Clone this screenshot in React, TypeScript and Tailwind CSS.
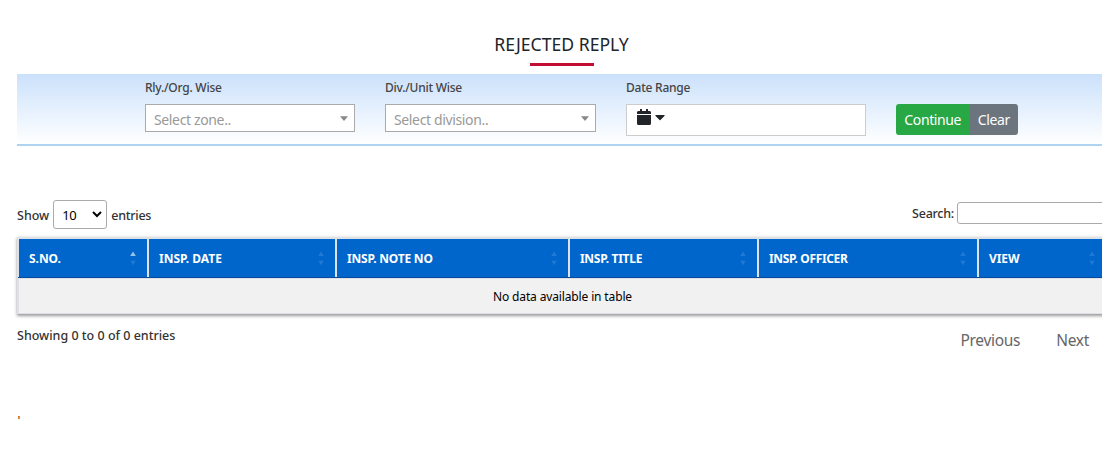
import React from "react";

const columns = [
  { label: "S.NO.", width: "w-[130px]", spacing: "tracking-[-0.05px]", active: true },
  { label: "INSP. DATE", width: "w-[188px]", spacing: "tracking-[-0.02px]" },
  { label: "INSP. NOTE NO", width: "w-[233px]", spacing: "tracking-[-0.2px]" },
  { label: "INSP. TITLE", width: "w-[189px]", spacing: "tracking-[-0.3px]" },
  { label: "INSP. OFFICER", width: "w-[220px]", spacing: "tracking-[-0.35px]" },
  { label: "VIEW", width: "w-[129px]", spacing: "tracking-[-0.1px]" },
];

function SortArrows({ active }: { active?: boolean }) {
  return (
    <svg width="6" height="15" viewBox="0 0 6 15" fill="#fff" className="shrink-0">
      <path d="M3 0.5L5.8 5H0.2Z" opacity={active ? 0.6 : 0.13} />
      <path d="M3 14.3L5.8 9.8H0.2Z" opacity={0.13} />
    </svg>
  );
}

function FieldLabel({ text }: { text: string }) {
  return (
    <div className="h-[30px] pt-[5px] text-[12px] leading-[18px] font-medium tracking-[-0.24px] whitespace-nowrap text-[#444]">
      {text}
    </div>
  );
}

function SelectBox({ label, placeholder }: { label: string; placeholder: string }) {
  return (
    <div className="w-[210px] shrink-0">
      <FieldLabel text={label} />
      <div className="flex h-7 items-center justify-between border border-[#aaa] bg-white pr-1.5 pl-2">
        <span className="pt-[3px] text-[14px] leading-5 tracking-[-0.36px] text-[#999]">{placeholder}</span>
        <svg width="8" height="5" viewBox="0 0 8 5" fill="#888">
          <path d="M0 0.3H8L4 5Z" />
        </svg>
      </div>
    </div>
  );
}

export default function App() {
  return (
    <div className="h-[465px] w-full overflow-hidden bg-white pl-[17px] font-['Noto_Sans',sans-serif] text-[#212529]">
      <div className="w-[1089px]">
        <header className="flex h-[74px] flex-col items-center">
          <h1 className="mt-[32px] text-[17.6px] leading-6 whitespace-nowrap">REJECTED REPLY</h1>
          <div className="mt-[7px] h-[3px] w-16 bg-[#c20e35]" />
        </header>

        <section className="flex h-[72px] border-b-2 border-[#aed4f2] bg-linear-to-b from-[#cbe1fb] to-white pl-[128px]">
          <SelectBox label="Rly./Org. Wise" placeholder="Select zone.." />
          <div className="w-[30px] shrink-0" />
          <div className="w-[211px] shrink-0 [&>div]:w-full">
            <SelectBox label="Div./Unit Wise" placeholder="Select division.." />
          </div>
          <div className="ml-[30px] w-[240px] shrink-0">
            <FieldLabel text="Date Range" />
            <div className="flex h-8 items-start border border-[#ccc] bg-white pt-1 pl-2.5">
              <svg width="14" height="16" viewBox="0 0 448 512" fill="#212529">
                <path d="M0 464c0 26.5 21.5 48 48 48h352c26.500 0 48-21.500 48-48V192H0v272zM448 112v48H0v-48c0-26.500 21.500-48 48-48h48V12c0-6.600 5.400-12 12-12h40c6.600 0 12 5.400 12 12v52h128V12c0-6.600 5.400-12 12-12h40c6.600 0 12 5.400 12 12v52h48c26.500 0 48 21.500 48 48z" />
              </svg>
              <svg width="10" height="16" viewBox="0 0 320 512" fill="#212529" className="ml-1">
                <path d="M31.300 192h257.300c17.800 0 26.700 21.500 14.100 34.100L174.100 354.800c-7.800 7.800-20.500 7.800-28.300 0L17.200 226.100C4.600 213.500 13.500 192 31.300 192z" />
              </svg>
            </div>
          </div>
          <div className="mt-[30px] ml-[30px] flex h-[31px] text-[14px] tracking-[-0.38px] text-white">
            <button className="w-[73.500px] rounded-l-[3px] bg-[#28a745]">Continue</button>
            <button className="w-[48.500px] rounded-r-[3px] bg-[#6c757d]">Clear</button>
          </div>
        </section>

        <div className="flex h-[91px] justify-between pt-[54px] text-[12.5px] font-medium text-[#333]">
          <div className="flex h-[29px] items-center">
            <span className="pt-[3px]">Show</span>
            <div className="mr-1 ml-1 flex h-[29px] w-[54px] items-center justify-between rounded-[3px] border border-[#aaa] pr-1 pl-2 text-[13px] font-normal text-black">
              <span className="pt-0.5 tracking-[-0.4px]">10</span>
              <svg width="10" height="7" viewBox="0 0 10 7" fill="none" stroke="#000" strokeWidth="2">
                <path d="M1 1L5 5L9 1" />
              </svg>
            </div>
            <span className="pt-[3px] tracking-[-0.25px]">entries</span>
          </div>
          <div className="mt-0.5 flex h-[22px] items-center">
            <span className="mr-[3px] pt-[3px] tracking-[-0.24px]">Search:</span>
            <div className="h-[22px] w-[149px] rounded-[3px] border border-[#aaa]" />
          </div>
        </div>

        <div className="h-[78px] border-t-2 border-b border-l border-t-[#dee2e6] border-b-[#aaa] border-l-[#dee2e6] shadow-[0_1px_3px_rgba(0,0,0,0.4)]">
          <div className="flex h-[39px] border-b border-b-[#0a4a9e] bg-[#0066cc]">
            <div className="w-px shrink-0 bg-[#dee2e6]" />
            {columns.map((c) => (
              <div
                key={c.label}
                className={`flex shrink-0 items-center justify-between border-r-2 border-[#dee2e6] pr-[11px] pl-2.5 text-[12px] font-bold text-white ${c.width}`}
              >
                <span className={`pt-0.5 ${c.spacing}`}>{c.label}</span>
                <SortArrows active={c.active} />
              </div>
            ))}
          </div>
          <div className="flex h-9 items-center justify-center border-y border-l border-[#dee2e6] bg-[#f1f1f1] pt-0.5 text-[12px] tracking-[-0.14px] text-black">
            No data available in table
          </div>
        </div>

        <footer className="flex justify-between">
          <div className="mt-3 text-[12.5px] leading-[18px] font-medium text-[#333]">Showing 0 to 0 of 0 entries</div>
          <nav className="mt-[13px] flex gap-9 pr-[17px] text-[15.5px] leading-6 tracking-[-0.3px] text-[#666]">
            <span>Previous</span>
            <span>Next</span>
          </nav>
        </footer>
        <div className="mt-[64px] ml-px h-[3px] w-[2px] bg-linear-to-r from-[#d9822b] from-50% to-[#62aee4] to-50%" />
      </div>
    </div>
  );
}
